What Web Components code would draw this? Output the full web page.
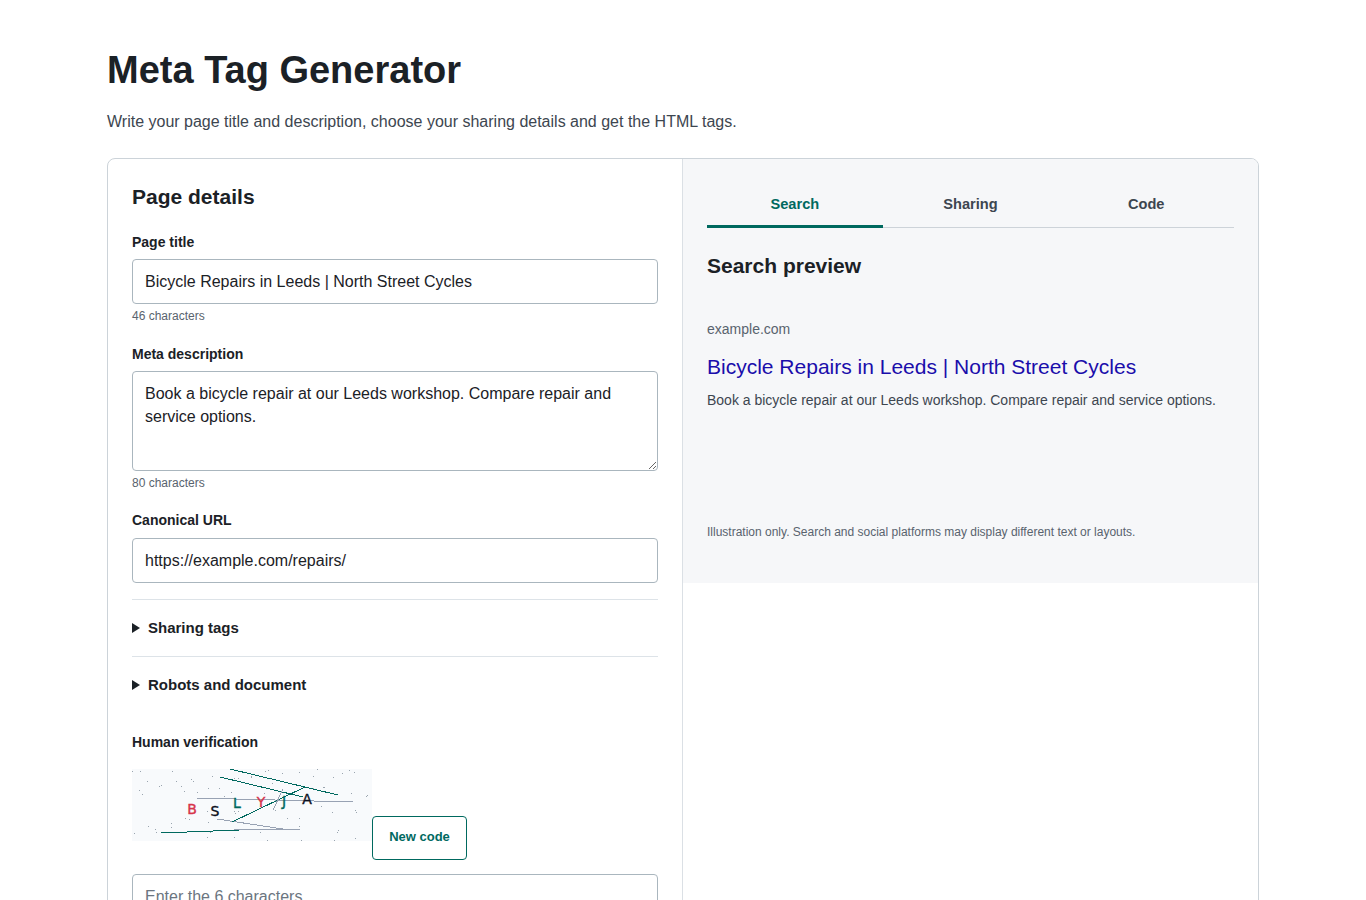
<!DOCTYPE html>
<html lang="en"><head><meta charset="utf-8"><title>Meta Tag Generator</title>
<style>
html,body{margin:0;padding:0;background:#fff}
body{font-family:"Liberation Sans",Arial,sans-serif;color:#1b2126}
</style></head><body>
<template id="t-page"><style>
:host{display:block;box-sizing:border-box;width:1152px;margin:0 auto 0 107px;padding-top:44px;padding-bottom:40px}
h1{margin:0;font-size:38px;line-height:52px;font-weight:700;color:#1b2126}
p{margin:14px 0 0;font-size:16px;line-height:24px;color:#3d4650}
.body{margin-top:24px}
</style><h1><slot name="title"></slot></h1><p><slot name="lead"></slot></p><div class="body"><slot></slot></div></template>

<template id="t-card"><style>
:host{display:grid;grid-template-columns:575px 1fr;align-items:start;box-sizing:border-box;border:1px solid #ccd3d9;border-radius:8px;background:#fff;overflow:hidden}
::slotted([slot=a]){border-right:1px solid #dbe0e5}
</style><slot name="a"></slot><slot name="b"></slot></template>

<template id="t-form"><style>
:host{display:block;box-sizing:border-box;padding:23px 24px 24px}
h2{margin:0 0 21px;font-size:21px;line-height:29px;font-weight:700;color:#1b2126}
</style><h2><slot name="heading"></slot></h2><slot></slot></template>

<template id="t-field"><style>
:host{display:block;margin-bottom:18px}
:host([last]){margin-bottom:16.5px}
:host([code]){margin-top:14px}
label{display:block;font-size:14px;line-height:1.45;font-weight:700;color:#1b2126;margin-bottom:7px}
.box{box-sizing:border-box;width:100%;display:block;border:1px solid #aab6be;border-radius:4px;background:#fff;padding:0 12px;font:16px/23px "Liberation Sans",Arial,sans-serif;color:#1b2126;margin:0;outline:0}
input.box{height:45px;padding-top:.6px}
:host([last]) input.box{padding-top:2px}
textarea.box{height:100px;padding:10px 12px;resize:vertical}
.box::placeholder{color:#6b7580;opacity:1}
small{display:block;font-size:12px;line-height:1.45;color:#59636e;margin-top:4px}
</style><label for="c"></label><span id="slot"></span><small hidden></small></template>

<template id="t-more"><style>
:host{display:block;border-top:1px solid #dde3e8;height:57px;box-sizing:border-box}
.s{display:flex;align-items:center;height:56px;font-size:15px;font-weight:700;color:#1b2126}
.s span{display:block;margin-top:-2px}
svg{width:8px;height:10px;flex:none;margin-right:8px}
</style><div class="s"><svg viewBox="0 0 8 10"><path d="M0 0L8 5L0 10Z" fill="#1b2126"/></svg><span><slot></slot></span></div></template>

<template id="t-captcha"><style>
:host{display:block;margin-top:19px}
.t{font-size:14px;line-height:1.45;font-weight:700;color:#1b2126;margin-bottom:16.5px}
.r{display:flex;align-items:flex-end}
svg{display:block;width:240px;height:72px;flex:none;margin-bottom:19px}
text{font-family:"DejaVu Sans",sans-serif;font-size:14px;text-anchor:middle;stroke-width:.4}
button{box-sizing:border-box;height:44px;width:95px;padding:0 0 2px;border:1px solid #00695f;border-radius:4px;background:#fff;color:#00695f;font:700 13px "Liberation Sans",Arial,sans-serif}
</style><div class="t"><slot name="label"></slot></div><div class="r"><svg id="cap" viewBox="0 0 240 72"><rect width="240" height="72" fill="#f8fafc"/>
<g id="dots" fill="#9aa5af"></g>
<g fill="none" stroke-width="1" shape-rendering="crispEdges">
<path d="M98 0L206 26" stroke="#00695f"/><path d="M88 8L171 28" stroke="#00695f"/>
<path d="M64 29L221 33" stroke="#98a2b3"/>
<path d="M85 50L151 60" stroke="#98a2b3"/><path d="M101 60L168 61" stroke="#98a2b3"/>
<path d="M100 53L173 18" stroke="#00695f"/>
<path d="M29 64L107 61" stroke="#00695f"/><path d="M151 20L141 41" stroke="#98a2b3"/>
</g>
<text x="60" y="45" fill="#d7344a" stroke="#d7344a">B</text><text x="83" y="47" fill="#0b1020" stroke="#0b1020">S</text><text x="105" y="39" fill="#00695f" stroke="#00695f">L</text><text x="129" y="38" fill="#d7344a" stroke="#d7344a">Y</text><text x="152" y="37" fill="#00695f" stroke="#00695f">J</text><text x="175" y="35" fill="#0b1020" stroke="#0b1020">A</text>
</svg><button type="button"><slot name="btn"></slot></button></div></template>

<template id="t-preview"><style>
:host{display:block;box-sizing:border-box;background:#f6f7f9;padding:24px 24px 0;height:424px}
.tabs{display:flex;border-bottom:1px solid #cdd3d9;height:45px;box-sizing:border-box}
</style><div class="tabs"><slot name="tab"></slot></div><slot></slot></template>

<template id="t-tab"><style>
:host{flex:1;display:flex;align-items:center;justify-content:center;box-sizing:border-box;height:45px;font-size:14.6px;font-weight:700;color:#3d4650;padding-bottom:4px}
:host([active]){color:#00695f;border-bottom:3px solid #00695f;padding-bottom:1px}
</style><slot></slot></template>

<template id="t-serp"><style>
:host{display:block}
h2{margin:23px 0 0;font-size:21px;line-height:29px;font-weight:700;color:#1b2126}
.u{margin-top:39px;font-size:14px;line-height:20px;color:#59636e}
.l{margin-top:14px;font-size:21px;line-height:28px;color:#1a0dab}
.d{margin-top:9px;font-size:14px;line-height:21px;color:#3d4650}
.n{margin-top:112px;font-size:12px;line-height:18px;color:#59636e}
</style><h2><slot name="heading"></slot></h2><div class="u"><slot name="url"></slot></div><div class="l"><slot name="link"></slot></div><div class="d"><slot name="desc"></slot></div><div class="n"><slot name="note"></slot></div></template>

<page-shell>
<span slot="title">Meta Tag Generator</span>
<span slot="lead">Write your page title and description, choose your sharing details and get the HTML tags.</span>
<tool-card>
<page-form slot="a">
<span slot="heading">Page details</span>
<form-field label="Page title" value="Bicycle Repairs in Leeds | North Street Cycles" hint="46 characters"></form-field>
<form-field label="Meta description" multiline value="Book a bicycle repair at our Leeds workshop. Compare repair and service options." hint="80 characters"></form-field>
<form-field last label="Canonical URL" value="https://example.com/repairs/"></form-field>
<more-section>Sharing tags</more-section>
<more-section>Robots and document</more-section>
<captcha-box><span slot="label">Human verification</span><span slot="btn">New code</span></captcha-box>
<form-field code placeholder="Enter the 6 characters"></form-field>
</page-form>
<preview-pane slot="b">
<preview-tab slot="tab" active>Search</preview-tab><preview-tab slot="tab">Sharing</preview-tab><preview-tab slot="tab">Code</preview-tab>
<serp-view>
<span slot="heading">Search preview</span>
<span slot="url">example.com</span>
<span slot="link">Bicycle Repairs in Leeds | North Street Cycles</span>
<span slot="desc">Book a bicycle repair at our Leeds workshop. Compare repair and service options.</span>
<span slot="note">Illustration only. Search and social platforms may display different text or layouts.</span>
</serp-view>
</preview-pane>
</tool-card>
</page-shell>
<script>
function simple(name,tpl,init){customElements.define(name,class extends HTMLElement{constructor(){super();this.attachShadow({mode:'open'}).appendChild(document.getElementById(tpl).content.cloneNode(true));}connectedCallback(){init&&init(this)}})}
simple('page-shell','t-page');simple('tool-card','t-card');simple('page-form','t-form');simple('more-section','t-more');
simple('preview-pane','t-preview');simple('preview-tab','t-tab');simple('serp-view','t-serp');
simple('form-field','t-field',el=>{const s=el.shadowRoot,l=s.querySelector('label'),h=s.querySelector('small'),p=s.getElementById('slot');
 const lab=el.getAttribute('label');if(lab)l.textContent=lab;else l.remove();
 let c;if(el.hasAttribute('multiline')){c=document.createElement('textarea');c.textContent=el.getAttribute('value')||''}else{c=document.createElement('input');c.setAttribute('value',el.getAttribute('value')||'')}
 if(el.getAttribute('placeholder'))c.placeholder=el.getAttribute('placeholder');
 c.className='box';c.id='c';p.replaceWith(c);
 if(el.getAttribute('hint')){h.hidden=false;h.textContent=el.getAttribute('hint')}});
simple('captcha-box','t-captcha',el=>{const g=el.shadowRoot.getElementById('dots');
 const a=[7,18,30,18,127,18,52,48,88,63,94,60,139,48,184,42,190,50,154,63,163,80,28,75,37,87,202,82,247,33,235,70,268,70,283,95,304,82,313,40,325,40,364,35,166,160,178,163,124,175,124,186,55,183,76,193,79,202,13,204,175,198,184,198,235,172,241,202,232,217,313,217,316,145,313,140,325,140,232,140];
 const b=[55,15,46,18,97,24,148,21,202,14,298,15,277,24,313,21,190,33,4,36,67,54,250,36,220,66,223,68,304,85,349,93,352,90,190,69,79,75,43,84,214,124,247,142,112,160,316,137,319,142,148,184,265,196,262,202,31,202,316,220,52,226,103,232,154,226,253,226,148,160,76,136];
 let o='';
 for(let i=0;i<a.length;i+=2)o+=`<rect x="${Math.floor(a[i]/3-2)}" y="${Math.floor(a[i+1]/3-4)}" width="1" height="1"/>`;
 for(let i=0;i<b.length;i+=2)o+=`<rect x="${Math.floor(b[i]/3+118)}" y="${Math.floor(b[i+1]/3-4)}" width="1" height="1"/>`;
 g.innerHTML=o});
</script></body></html>
